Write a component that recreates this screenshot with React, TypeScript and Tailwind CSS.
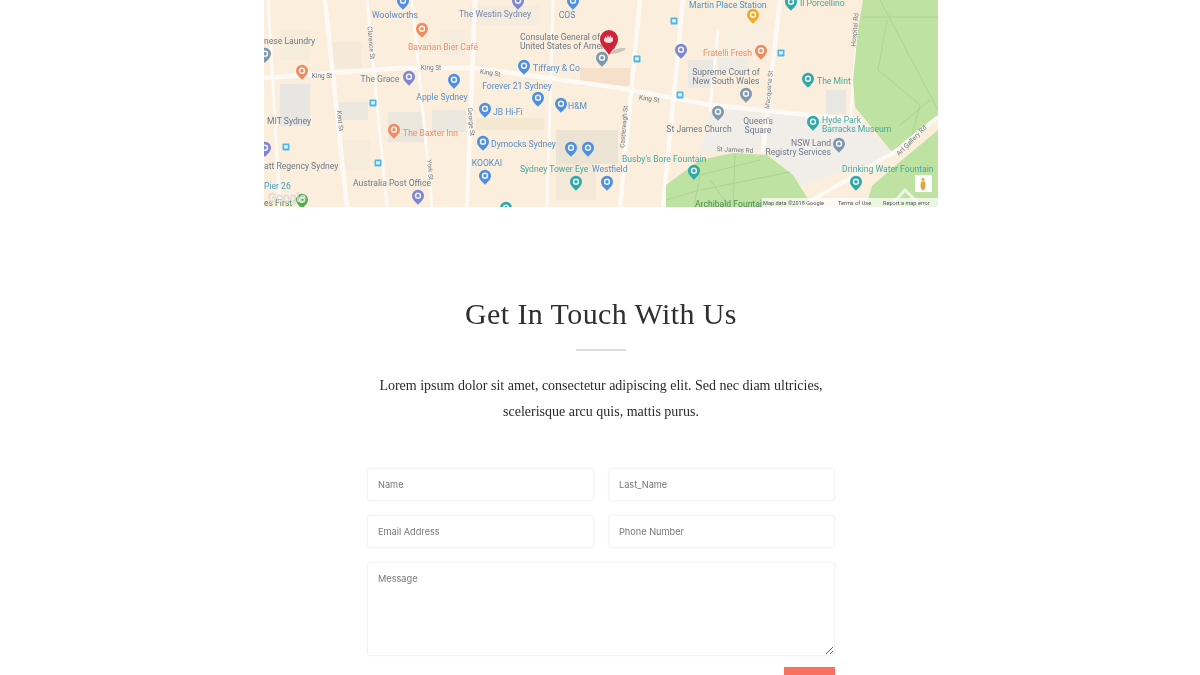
const PIN_COLORS = {
  blue: "#4f8fe0",
  purple: "#7f86d2",
  orange: "#ee8c60",
  teal: "#2fa8a8",
  slate: "#7f97ad",
  yellow: "#f0aa28",
  green: "#4caf50",
};

type PinColor = keyof typeof PIN_COLORS;

// every map coordinate is in page pixels (viewBox starts at x=264)
const pins: [number, number, PinColor][] = [
  [403, 2, "blue"], [518, 2, "purple"], [573, 2, "blue"], [422, 30, "orange"],
  [265, 55, "slate"], [302, 72, "orange"], [409, 78, "purple"], [454, 81, "blue"],
  [524, 67, "blue"], [538, 99, "blue"], [561, 105, "blue"], [485, 110, "blue"],
  [394, 131, "orange"], [483, 143, "blue"], [571, 149, "blue"], [588, 149, "blue"],
  [265, 149, "purple"], [485, 177, "blue"], [576, 183, "teal"], [418, 197, "purple"],
  [302, 201, "green"], [506, 209, "teal"], [753, 16, "yellow"], [791, 3, "teal"],
  [602, 59, "slate"], [681, 51, "purple"], [761, 52, "orange"], [746, 95, "slate"],
  [808, 80, "teal"], [718, 113, "slate"], [813, 123, "teal"], [839, 145, "slate"],
  [694, 172, "teal"], [856, 183, "teal"], [607, 183, "blue"],
];

const transit = [[373, 103], [286, 147], [378, 163], [674, 21], [637, 59], [781, 53], [680, 95]];

const labels: [string, number, number, string, ("start" | "middle" | "end")?][] = [
  ["Woolworths", 395, 18, "#5f86c0", "middle"],
  ["The Westin Sydney", 495, 17, "#7088b0", "middle"],
  ["COS", 567, 18, "#5d84b5", "middle"],
  ["Bavarian Bier Café", 443, 50, "#e5906e", "middle"],
  ["Consulate General of", 520, 40, "#6c7a88"],
  ["United States of America", 520, 49, "#6c7a88"],
  ["nese Laundry", 264, 44, "#6c7a88"],
  ["The Grace", 380, 82, "#6c8098", "middle"],
  ["Tiffany & Co", 533, 71, "#5a8ec8"],
  ["Forever 21 Sydney", 517, 89, "#5a8ec8", "middle"],
  ["Apple Sydney", 442, 100, "#5a8ec8", "middle"],
  ["H&M", 568, 109, "#5a8ec8"],
  ["JB Hi-Fi", 493, 115, "#5a8ec8"],
  ["MIT Sydney", 267, 124, "#6c7a88"],
  ["The Baxter Inn", 403, 136, "#e5906e"],
  ["Dymocks Sydney", 491, 147, "#5a8ec8"],
  ["KOOKAI", 487, 166, "#5a8ec8", "middle"],
  ["att Regency Sydney", 264, 169, "#6c7a88"],
  ["Sydney Tower Eye", 520, 172, "#45a8a0"],
  ["Westfield", 592, 172, "#5a8ec8"],
  ["Australia Post Office", 392, 186, "#6c7a88", "middle"],
  ["Pier 26", 264, 189, "#4aa3c0"],
  ["es First", 264, 206, "#4b8a55"],
  ["Martin Place Station", 689, 8, "#4a94c8"],
  ["Il Porcellino", 800, 6, "#45a8a0"],
  ["Fratelli Fresh", 703, 56, "#e5906e"],
  ["Supreme Court of", 726, 75, "#6c7a88", "middle"],
  ["New South Wales", 726, 84, "#6c7a88", "middle"],
  ["The Mint", 817, 84, "#45a8a0"],
  ["St James Church", 699, 132, "#6c7a88", "middle"],
  ["Queen's", 758, 124, "#6c7a88", "middle"],
  ["Square", 758, 133, "#6c7a88", "middle"],
  ["Hyde Park", 822, 123, "#45a8a0"],
  ["Barracks Museum", 822, 132, "#45a8a0"],
  ["NSW Land", 831, 146, "#6c7a88", "end"],
  ["Registry Services", 831, 155, "#6c7a88", "end"],
  ["Busby's Bore Fountain", 622, 162, "#45a8a0"],
  ["Drinking Water Fountain", 842, 172, "#45a8a0"],
  ["Archibald Fountain", 695, 207, "#4b8a55"],
];

const streets: [string, number, number, number][] = [
  ["Clarence St", 369, 43, 85], ["Kent St", 338, 121, 85], ["George St", 469, 122, 85],
  ["York St", 428, 170, 85], ["King St", 322, 78, 0], ["King St", 431, 70, 0],
  ["King St", 490, 75, 8], ["King St", 649, 101, 8], ["Castlereagh St", 626, 127, -85],
  ["Macquarie St", 771, 90, -85], ["Hospital Rd", 857, 30, -85], ["St James Rd", 735, 152, 3],
  ["Art Gallery Rd", 913, 142, -45],
];

const buildings: [number, number, number, number, string][] = [
  [280, 84, 30, 42, "#e8e6e2"], [336, 102, 32, 18, "#ebe7df"], [388, 112, 36, 30, "#ebe6de"],
  [332, 42, 30, 26, "#f5ead9"], [432, 110, 34, 22, "#ebe6de"], [476, 118, 68, 12, "#f5e8d0"],
  [556, 130, 62, 34, "#ebe3d4"], [556, 164, 40, 36, "#f4e9d8"], [470, 5, 70, 20, "#f5ecdd"],
  [688, 60, 26, 28, "#ebe8e3"], [718, 58, 30, 14, "#efebe5"], [826, 90, 20, 24, "#e8e7e4"],
  [580, 68, 50, 18, "#f7e0ca"], [280, 30, 30, 30, "#f6ecdc"], [340, 140, 30, 30, "#f6ecdc"],
  [440, 30, 25, 25, "#f5ecdd"], [725, 25, 40, 25, "#f8efe1"],
];

const Pin = ({ x, y, color }: { x: number; y: number; color: PinColor }) => (
  <g transform={`translate(${x} ${y})`}>
    <path
      d="M0 8C-1.300 5.500-6 3.200-6-1.300a6 6 0 0 1 12 0C6 3.200 1.300 5.500 0 8Z"
      fill={PIN_COLORS[color]}
    />
    <circle cy={-1.3} r={3.2} fill="#fff" opacity={0.9} />
    <circle cy={-1.3} r={1.7} fill={PIN_COLORS[color]} />
  </g>
);

const MapView = () => (
  <svg
    viewBox="264 0 674 207"
    className="block w-[674px] h-[207px] blur-[0.7px]"
    fontFamily="Roboto, sans-serif"
  >
    <rect x={264} width={674} height={207} fill="#fbeedd" />
    {buildings.map(([x, y, w, h, fill], i) => (
      <rect key={i} x={x} y={y} width={w} height={h} fill={fill} />
    ))}

    {/* plaza by Queen's Square */}
    <path d="M712 104 860 120 895 155 800 186 768 150 700 152Z" fill="#f1eeea" />

    {/* roads */}
    <g stroke="#fdfaf5" fill="none" strokeLinecap="round">
      <path d="M268 0 280 207M367 0 387 207M412 0 432 207M553 0 547 207M718 30 710 110M858 30 850 120" strokeWidth={3} />
      <path d="M325 0 347 207M475 0 467 207M640 0 620 207M683 0 663 207M780 0 763 150" strokeWidth={4.5} />
      <path d="M264 78 400 68 475 68 620 88 710 105 860 120" strokeWidth={4.5} />
    </g>

    {/* parks */}
    <path d="M863 0H938V117L893 153 855 107 853 80 858 30Z" fill="#bde2a2" />
    <path d="M938 130V207H866L872 186 902 160Z" fill="#bde2a2" />
    <path d="M666 207V185L700 160 733 153 767 155 793 175 813 207Z" fill="#bde2a2" />
    <g stroke="#a6cf92" strokeWidth={0.8} fill="none">
      <path d="M880 0 938 110M862 17H938M887 20 878 70 920 105 908 150M930 100 900 125" />
      <path d="M694 207 700 175 760 160M735 155 733 207M666 200 700 190 790 172M710 180 730 207" />
    </g>
    <path d="M800 207 893 153 938 117" stroke="#fdfaf5" strokeWidth={4} fill="none" />
    <path d="M890 207 905 190 915 200 925 207" stroke="#eef6e6" strokeWidth={3} fill="none" />

    {streets.map(([text, x, y, rot], i) => (
      <text
        key={i}
        x={x}
        y={y}
        fontSize={6.5}
        fill="#6f7780"
        textAnchor="middle"
        transform={`rotate(${rot} ${x} ${y})`}
      >
        {text}
      </text>
    ))}
    {labels.map(([text, x, y, fill, anchor], i) => (
      <text key={i} x={x} y={y} fontSize={8.6} fill={fill} textAnchor={anchor ?? "start"}>
        {text}
      </text>
    ))}
    {transit.map(([x, y], i) => (
      <g key={i}>
        <rect x={x - 3.5} y={y - 3.5} width={7} height={7} rx={1} fill="#4fb6e8" />
        <rect x={x - 1.8} y={y - 1.8} width={3.6} height={3.2} fill="#e4f5fc" />
      </g>
    ))}
    {pins.map(([x, y, color], i) => (
      <Pin key={i} x={x} y={y} color={color} />
    ))}

    {/* location marker */}
    <ellipse cx={617} cy={51} rx={9} ry={2} fill="#777" opacity={0.35} transform="rotate(-15 617 51)" />
    <path d="M609 55C606 49 600 46 600 39a9 9 0 0 1 18 0C618 46 612 49 609 55Z" fill="#cf2338" />
    <path d="M604 41c0-3 1-3 1.500-5l1 2 1.500-3 1 3 1.500-3 1 3 1-1c.8 2 .5 4 .5 4-2 2.500-7 2.500-9 0Z" fill="#fff" opacity={0.85} />

    {/* google logo and attribution */}
    <text x={268} y={202} fontSize={12} fill="#e8e6e1" stroke="#cfcdc8" strokeWidth={0.3}>
      Google
    </text>
    <rect x={762} y={198} width={176} height={9} fill="#fff" opacity={0.7} />
    <g fontSize={5.6} fill="#555">
      <text x={763} y={204.5}>Map data ©2018 Google</text>
      <text x={838} y={204.5}>Terms of Use</text>
      <text x={883} y={204.5}>Report a map error</text>
    </g>

    {/* pegman */}
    <rect x={915} y={175} width={17} height={17} fill="#fff" />
    <circle cx={923} cy={179.500} r={1.500} fill="#e2a33a" />
    <path d="M921 181.500h4l.5 5-1.300 3.500h-2.400l-1.300-3.500Z" fill="#e2a33a" />
  </svg>
);

const inputClass =
  "h-[33px] min-w-0 flex-1 rounded-[3px] border border-[#f3f3f3] bg-white px-[10px] text-[9.2px] text-[#777] shadow-[0_0_3px_rgba(0,0,0,0.04)] placeholder:text-[#777] outline-none";

export default function App() {
  return (
    <div className="h-[675px] overflow-hidden bg-white pl-[2px]">
      <div className="flex flex-col items-center">
        <MapView />

        <h1 className="mt-[88px] font-['Liberation_Serif',serif] text-[30px] leading-[38px] tracking-[0.4px] text-[#2f2f2f] blur-[0.3px]">
          Get In Touch With Us
        </h1>
        <div className="mt-[16px] h-[2px] w-[50px] bg-[#dcdcdc]" />
        <p className="mt-[22px] w-[480px] text-center font-['Liberation_Serif',serif] text-[14px] leading-[26px] text-[#2a2a2a] blur-[0.3px]">
          Lorem ipsum dolor sit amet, consectetur adipiscing elit. Sed nec diam ultricies,
          <br />
          scelerisque arcu quis, mattis purus.
        </p>

        <form className="mt-[43px] flex w-[468px] flex-col gap-[14px] font-['Inter',sans-serif] blur-[0.3px]">
          <div className="flex gap-[14px]">
            <input className={inputClass} placeholder="Name" />
            <input className={inputClass} placeholder="Last_Name" />
          </div>
          <div className="flex gap-[14px]">
            <input className={inputClass} placeholder="Email Address" />
            <input className={inputClass} placeholder="Phone Number" />
          </div>
          <textarea
            className="block h-[94px] w-full rounded-[3px] border border-[#f3f3f3] bg-white px-[10px] py-[9px] text-[9.2px] text-[#777] shadow-[0_0_3px_rgba(0,0,0,0.04)] placeholder:text-[#777] outline-none"
            placeholder="Message"
          />
          <div className="-mt-[3px] flex justify-end">
            <button type="button" className="h-[36px] w-[51px] bg-[#f9705f] text-[10px] text-white">
              Send
            </button>
          </div>
        </form>
      </div>
    </div>
  );
}
